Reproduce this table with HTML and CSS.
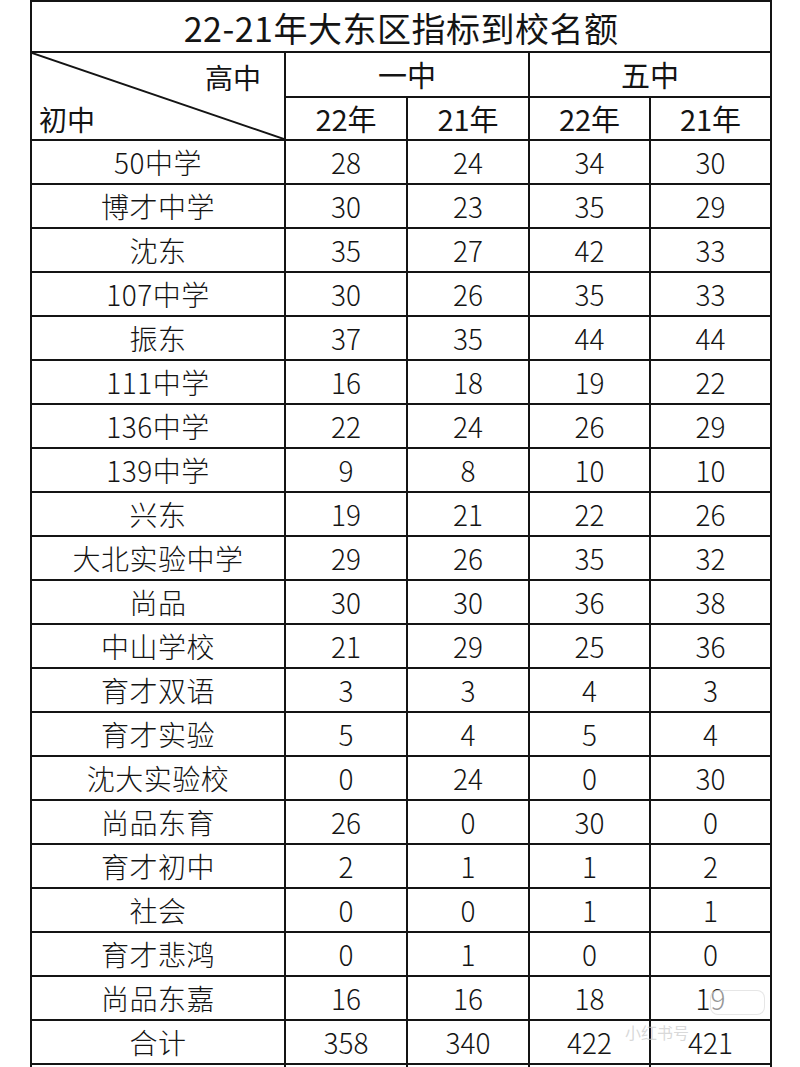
FILE: index.html
```html
<!DOCTYPE html>
<html lang="zh-CN">
<head>
<meta charset="utf-8">
<title>22-21年大东区指标到校名额</title>
<link rel="stylesheet" href="styles.css">
</head>
<body>
<div class="page">
<table class="quota">
  <colgroup>
    <col class="c-name">
    <col class="c-num">
    <col class="c-num">
    <col class="c-num2">
    <col class="c-num2">
  </colgroup>
  <tr class="r-title"><th colspan="5" class="title">22-21年大东区指标到校名额</th></tr>
  <tr class="r-head1">
    <th rowspan="2" class="diag">
      <svg class="diag-line" viewBox="0 0 100 100" preserveAspectRatio="none" aria-hidden="true"><line x1="0" y1="0" x2="100" y2="100" stroke="#141414" stroke-width="2" vector-effect="non-scaling-stroke"/></svg>
      <div class="diag-inner">
        <span class="diag-top">高中</span>
        <span class="diag-bottom">初中</span>
      </div>
    </th>
    <th colspan="2" class="h1">一中</th>
    <th colspan="2" class="h1">五中</th>
  </tr>
  <tr class="r-head2"><th class="h2">22年</th><th class="h2">21年</th><th class="h2">22年</th><th class="h2">21年</th></tr>
  <tr><td>50中学</td><td>28</td><td>24</td><td>34</td><td>30</td></tr>
  <tr><td>博才中学</td><td>30</td><td>23</td><td>35</td><td>29</td></tr>
  <tr><td>沈东</td><td>35</td><td>27</td><td>42</td><td>33</td></tr>
  <tr><td>107中学</td><td>30</td><td>26</td><td>35</td><td>33</td></tr>
  <tr><td>振东</td><td>37</td><td>35</td><td>44</td><td>44</td></tr>
  <tr><td>111中学</td><td>16</td><td>18</td><td>19</td><td>22</td></tr>
  <tr><td>136中学</td><td>22</td><td>24</td><td>26</td><td>29</td></tr>
  <tr><td>139中学</td><td>9</td><td>8</td><td>10</td><td>10</td></tr>
  <tr><td>兴东</td><td>19</td><td>21</td><td>22</td><td>26</td></tr>
  <tr><td>大北实验中学</td><td>29</td><td>26</td><td>35</td><td>32</td></tr>
  <tr><td>尚品</td><td>30</td><td>30</td><td>36</td><td>38</td></tr>
  <tr><td>中山学校</td><td>21</td><td>29</td><td>25</td><td>36</td></tr>
  <tr><td>育才双语</td><td>3</td><td>3</td><td>4</td><td>3</td></tr>
  <tr><td>育才实验</td><td>5</td><td>4</td><td>5</td><td>4</td></tr>
  <tr><td>沈大实验校</td><td>0</td><td>24</td><td>0</td><td>30</td></tr>
  <tr><td>尚品东育</td><td>26</td><td>0</td><td>30</td><td>0</td></tr>
  <tr><td>育才初中</td><td>2</td><td>1</td><td>1</td><td>2</td></tr>
  <tr><td>社会</td><td>0</td><td>0</td><td>1</td><td>1</td></tr>
  <tr><td>育才悲鸿</td><td>0</td><td>1</td><td>0</td><td>0</td></tr>
  <tr><td>尚品东嘉</td><td>16</td><td>16</td><td>18</td><td>19</td></tr>
  <tr><td>合计</td><td>358</td><td>340</td><td>422</td><td>421</td></tr>
  <tr class="r-empty"><td></td><td></td><td></td><td></td><td></td></tr>
</table>
<div class="wm-badge" aria-hidden="true"></div>
<div class="wm-text" aria-hidden="true">小红书号</div>
</div>
</body>
</html>
```

FILE: styles.css
```css
html, body {
  margin: 0;
  padding: 0;
  background: #ffffff;
}

.page {
  position: relative;
  width: 800px;
  height: 1067px;
  overflow: hidden;
  padding-left: 30px;
  box-sizing: border-box;
}

.quota {
  border-collapse: collapse;
  table-layout: fixed;
  width: 741px;
  font-family: "Noto Sans CJK SC", "Noto Sans", sans-serif;
  color: #141414;
}

.c-name { width: 254px; }
.c-num { width: 122px; }
.c-num2 { width: 121px; }

.quota th,
.quota td {
  border: 2px solid #141414;
  padding: 0;
  text-align: center;
  vertical-align: middle;
  font-weight: 300;
  font-size: 28px;
  line-height: 1;
}

.quota td:first-child {
  letter-spacing: 0.5px;
}

.quota tr { height: 44px; }
.quota tr.r-title { height: 51px; }
.quota tr.r-head1 { height: 45px; }
.quota tr.r-head2 { height: 43px; }
.quota tr.r-empty { height: 44px; }

.quota .title {
  font-size: 34px;
  letter-spacing: 0.5px;
  padding-top: 2px;
  font-weight: 400;
}

.quota .h1,
.quota .h2 {
  font-size: 29px;
  font-weight: 400;
}

.diag {
  position: relative;
}

.diag-line {
  position: absolute;
  left: 0;
  top: 0;
  width: 100%;
  height: 100%;
  display: block;
}

.diag-inner {
  display: flex;
  flex-direction: column;
  height: 86px;
  justify-content: space-between;
  font-size: 28px;
  font-weight: 400;
}

.diag-top {
  align-self: flex-end;
  padding: 10px 23px 0 0;
}

.diag-bottom {
  align-self: flex-start;
  padding: 0 0 6px 7px;
}

.wm-badge {
  position: absolute;
  left: 710px;
  top: 990px;
  width: 55px;
  height: 25px;
  border: 1px solid rgba(200, 200, 200, 0.45);
  border-radius: 8px;
  background: rgba(255, 255, 255, 0.55);
  box-sizing: border-box;
}

.wm-text {
  position: absolute;
  left: 625px;
  top: 1021px;
  color: rgba(200, 200, 200, 0.7);
  font-family: "Noto Sans CJK SC", sans-serif;
  font-size: 16px;
  line-height: 22px;
  white-space: nowrap;
}
```
